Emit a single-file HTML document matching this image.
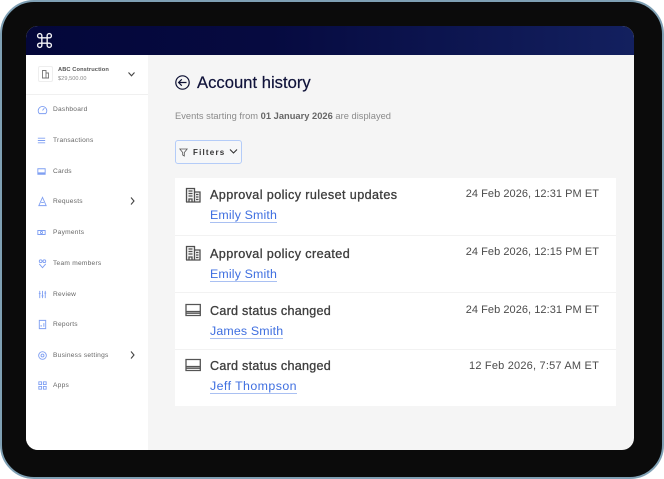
<!DOCTYPE html>
<html><head><meta charset="utf-8"><style>
html,body{margin:0;padding:0;background:#fff}
body{width:664px;height:479px;position:relative;overflow:hidden;font-family:"Liberation Sans",sans-serif}
div,a,span,svg{position:absolute;white-space:nowrap}
b span,b{position:static}
#frame{left:0;top:0;width:664px;height:479px;box-sizing:border-box;background:#0b0b0b;border:2px solid #7fa0b4;border-radius:34px}
#screen{left:26px;top:26px;width:608px;height:424px;border-radius:12px;overflow:hidden;background:#f5f5f5}
#head{left:0;top:0;width:608px;height:29px;background:linear-gradient(90deg,#04073a 0%,#060a40 40%,#13205f 100%)}
#side{left:0;top:29px;width:122px;height:395px;background:#fff}
.nav{left:27px;font-size:6.6px;color:#666;letter-spacing:.25px;line-height:8px}
.ni{left:10px;width:11px;height:11px;fill:none;stroke:#7f9ff2;stroke-width:1}
.t{left:210px;font-size:12.6px;letter-spacing:.4px;color:#3d3d3d;line-height:14px;-webkit-text-stroke:.3px #3d3d3d}
.l{left:210px;font-size:12.4px;letter-spacing:.15px;color:#3f6fe0;line-height:14px;border-bottom:1px solid #a9c0f2;padding-bottom:0}
.d{right:65px;font-size:11px;letter-spacing:.05px;color:#4c4c4c;line-height:13px}
.hr{left:175px;width:441px;height:1px;background:#f2f2f2}
.ic{left:185px;fill:#f4f4f4;stroke:#4f4f4f;stroke-width:1.3}
</style></head><body>
<div id="frame"></div>
<div id="screen">
<div id="head"></div>
<div id="side"></div>
</div>
<svg style="left:36px;top:32px" width="17" height="17" viewBox="0 0 16 16" fill="none" stroke="#f2f2f5" stroke-width="1.300"><path d="M5.500 5.500H10.500V10.500H5.500ZM5.500 5.500H3.500A2 2 0 1 1 5.500 3.500ZM10.500 5.500V3.500A2 2 0 1 1 12.500 5.500ZM10.500 10.500H12.500A2 2 0 1 1 10.500 12.500ZM5.500 10.500V12.500A2 2 0 1 1 3.500 10.500Z"/></svg>

<div style="left:26px;top:94px;width:122px;height:1px;background:#f0f0f0"></div>
<div style="left:38px;top:66px;width:15px;height:16px;box-sizing:border-box;border:1px solid #eee;border-radius:2px"></div>
<svg style="left:41px;top:69px" width="9" height="10" viewBox="0 0 9 10" fill="none" stroke="#777" stroke-width=".9"><path d="M1.500 9V1.500H5V9M5 4H7.500V9M1 9H8"/></svg>
<div style="left:58px;top:66px;font-size:5.7px;font-weight:bold;color:#555;letter-spacing:.1px;line-height:8px">ABC Construction</div>
<div style="left:58px;top:75px;font-size:5.6px;color:#888;letter-spacing:.05px;line-height:8px">$29,500.00</div>
<svg style="left:127px;top:71px" width="9" height="7" viewBox="0 0 9 7" fill="none" stroke="#444" stroke-width="1.100"><path d="M1.500 1.500 4.500 4.800 7.500 1.500"/></svg>

<svg class="ni" style="left:37px;top:104px" viewBox="0 0 12 12"><path d="M2.500 10.500A4.700 4.700 0 1 1 9.500 10.500ZM6 7 8 4.500"/></svg>
<div class="nav" style="left:53px;top:106px">Dashboard</div>
<svg class="ni" style="left:36px;top:135px" viewBox="0 0 12 12"><path d="M2 3.500H10M2 6H10M2 8.500H10"/></svg>
<div class="nav" style="left:53px;top:137px">Transactions</div>
<svg class="ni" style="left:36px;top:166px" viewBox="0 0 12 12"><path d="M2 3H10V9H2ZM2 7.500H10M2 8.500H10"/></svg>
<div class="nav" style="left:53px;top:168px">Cards</div>
<svg class="ni" style="left:37px;top:196px" viewBox="0 0 12 12"><path d="M6 1.500 2 10.500H10ZM4.500 7H7.500"/></svg>
<div class="nav" style="left:53px;top:198px">Requests</div>
<svg style="left:129px;top:196px" width="7" height="10" viewBox="0 0 7 10" fill="none" stroke="#444" stroke-width="1.100"><path d="M2 1.500 5 5 2 8.500"/></svg>
<svg class="ni" style="left:36px;top:227px" viewBox="0 0 12 12"><path d="M2 3.800H10V8.200H2ZM6 4.800A1.200 1.200 0 1 0 6 7.200A1.200 1.200 0 1 0 6 4.800Z"/></svg>
<div class="nav" style="left:53px;top:229px">Payments</div>
<svg class="ni" style="left:37px;top:258px" viewBox="0 0 12 12"><circle cx="4" cy="3.500" r="1.500"/><circle cx="8" cy="3.500" r="1.500"/><path d="M2.500 6.500 6 10.500 9.500 6.500"/></svg>
<div class="nav" style="left:53px;top:260px">Team members</div>
<svg class="ni" style="left:37px;top:289px" viewBox="0 0 12 12"><path d="M3 2V10M6 2V10M9 2V10M2 5H4M5 7.500H7M8 4.500H10"/></svg>
<div class="nav" style="left:53px;top:291px">Review</div>
<svg class="ni" style="left:37px;top:319px" viewBox="0 0 12 12"><path d="M2.500 1.500H9.500V10.500H2.500ZM4.500 8.500V6.500M7.500 8.500V4.500"/></svg>
<div class="nav" style="left:53px;top:321px">Reports</div>
<svg class="ni" style="left:37px;top:350px" viewBox="0 0 12 12"><circle cx="6" cy="6" r="4.200"/><circle cx="6" cy="6" r="1.600"/></svg>
<div class="nav" style="left:53px;top:352px">Business settings</div>
<svg style="left:129px;top:350px" width="7" height="10" viewBox="0 0 7 10" fill="none" stroke="#444" stroke-width="1.100"><path d="M2 1.500 5 5 2 8.500"/></svg>
<svg class="ni" style="left:37px;top:380px" viewBox="0 0 12 12"><path d="M2 2H5V5H2ZM7 2H10V5H7ZM2 7H5V10H2ZM7 7H10V10H7Z"/></svg>
<div class="nav" style="left:53px;top:382px">Apps</div>

<svg style="left:174px;top:74px" width="17" height="17" viewBox="0 0 17 17" fill="none" stroke="#0d1033" stroke-width="1.200"><circle cx="8.500" cy="8.500" r="6.700"/><path d="M12.500 8.500H4.800M7.800 5.300 4.600 8.500 7.800 11.700"/></svg>
<div style="left:197px;top:73px;font-size:16.6px;letter-spacing:.02px;color:#10133a;line-height:19px;-webkit-text-stroke:.2px #10133a">Account history</div>
<div style="left:175px;top:111px;font-size:9.3px;letter-spacing:.02px;color:#8a8a8a;line-height:11px">Events starting from <b style="color:#666">01 January 2026</b> are displayed</div>

<div style="left:175px;top:140px;width:67px;height:24px;box-sizing:border-box;border:1.500px solid #b4ccf8;border-radius:3px;background:#f6f7f8"></div>
<svg style="left:179px;top:148px" width="9" height="9" viewBox="0 0 9 9" fill="none" stroke="#555" stroke-width=".8"><path d="M.8 1H8.200L5.300 4.500V8L3.700 7V4.500Z"/></svg>
<div style="left:193px;top:148px;font-size:8px;font-weight:bold;letter-spacing:1.200px;color:#333;line-height:10px">Filters</div>
<svg style="left:229px;top:148px" width="9" height="7" viewBox="0 0 9 7" fill="none" stroke="#333" stroke-width="1.100"><path d="M1 1.500 4.500 5 8 1.500"/></svg>

<div style="left:175px;top:178px;width:441px;height:228px;background:#fff"></div>
<div class="hr" style="top:235px"></div>
<div class="hr" style="top:292px"></div>
<div class="hr" style="top:349px"></div>

<svg class="ic" style="top:187px" width="16" height="16" viewBox="0 0 16 16"><path d="M1.500 15V1.500H9.500V15M9.500 5H15V15H9.500M1 15H15.500M4 15V12H7V15M3.500 4H7.500M3.500 6.500H7.500M3.500 9H7.500M11 7.500H13.500M11 10H13.500M11 12.500H13.500"/></svg>
<div class="t" style="top:188px">Approval policy ruleset updates</div>
<div class="l" style="top:208px">Emily Smith</div>
<div class="d" style="top:188px">24 Feb 2026, 12:31 PM ET</div>

<svg class="ic" style="top:245px" width="16" height="16" viewBox="0 0 16 16"><path d="M1.500 15V1.500H9.500V15M9.500 5H15V15H9.500M1 15H15.500M4 15V12H7V15M3.500 4H7.500M3.500 6.500H7.500M3.500 9H7.500M11 7.500H13.500M11 10H13.500M11 12.500H13.500"/></svg>
<div class="t" style="top:247px">Approval policy created</div>
<div class="l" style="top:267px">Emily Smith</div>
<div class="d" style="top:246px">24 Feb 2026, 12:15 PM ET</div>

<svg class="ic" style="top:303px;fill:none;stroke-width:1.300;stroke:#555" width="16" height="14" viewBox="0 0 16 14"><path d="M1 1.500H15.300V12.500H1ZM1 8.500H15.300M1 10.200H15.300"/></svg>
<div class="t" style="top:304px;letter-spacing:.25px">Card status changed</div>
<div class="l" style="top:324px">James Smith</div>
<div class="d" style="top:304px">24 Feb 2026, 12:31 PM ET</div>

<svg class="ic" style="top:358px;fill:none;stroke-width:1.300;stroke:#555" width="16" height="14" viewBox="0 0 16 14"><path d="M1 1.500H15.300V12.500H1ZM1 8.500H15.300M1 10.200H15.300"/></svg>
<div class="t" style="top:359px;letter-spacing:.25px">Card status changed</div>
<div class="l" style="top:379px;letter-spacing:.42px">Jeff Thompson</div>
<div class="d" style="top:360px;letter-spacing:.2px">12 Feb 2026, 7:57 AM ET</div>
</body></html>
